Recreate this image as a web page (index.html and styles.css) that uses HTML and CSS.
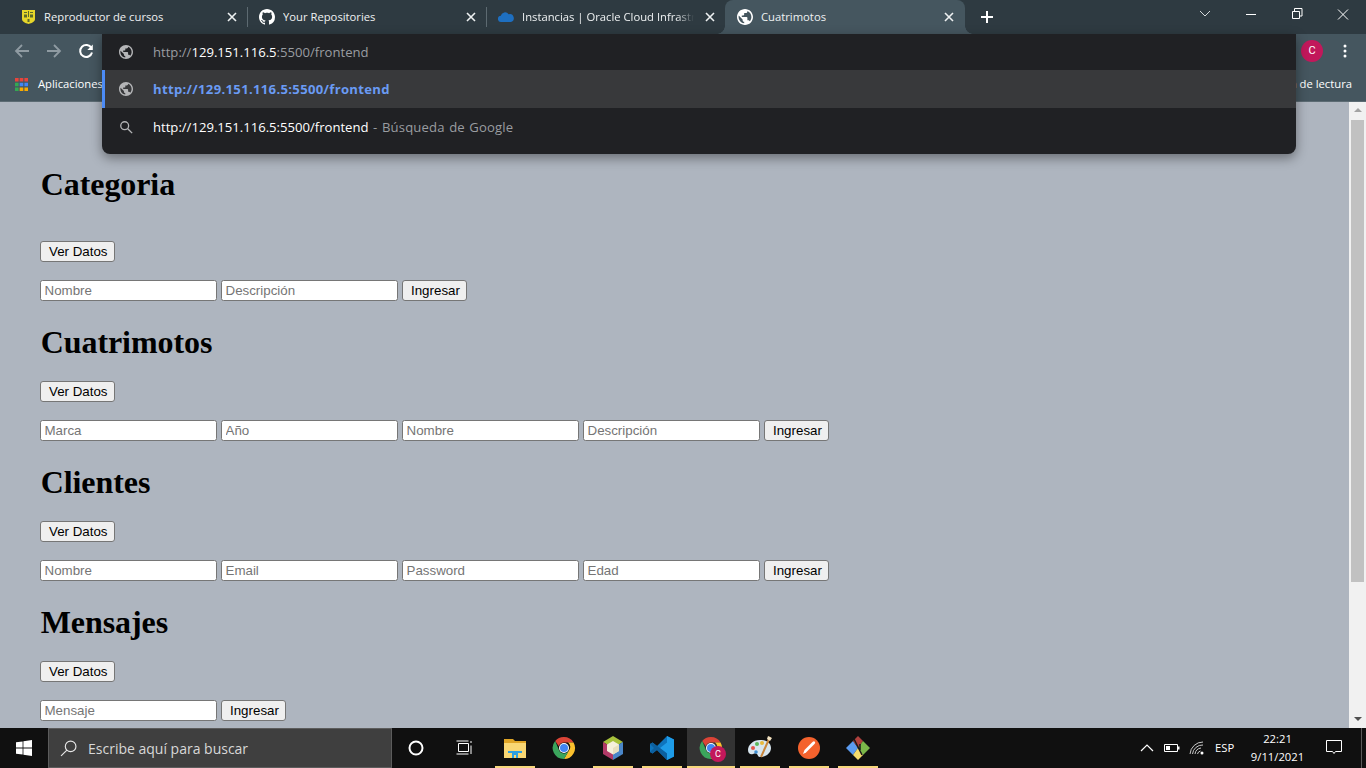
FILE: index.html
```html
<!DOCTYPE html>
<html lang="es">
<head>
<meta charset="utf-8">
<title>Cuatrimotos</title>
<link rel="stylesheet" href="styles.css">
</head>
<body>
<svg class="defs" width="0" height="0" aria-hidden="true"><defs>
<symbol id="globe" viewBox="2 2 20 20"><path fill="currentColor" d="M12 2C6.48 2 2 6.48 2 12s4.48 10 10 10 10-4.48 10-10S17.52 2 12 2zm-1 17.93c-3.95-.49-7-3.85-7-7.93 0-.62.08-1.21.21-1.79L9 15v1c0 1.1.9 2 2 2v1.93zm6.9-2.54c-.26-.81-1-1.39-1.9-1.39h-1v-3c0-.55-.45-1-1-1H8v-2h2c.55 0 1-.45 1-1V7h2c1.1 0 2-.9 2-2v-.41c2.93 1.19 5 4.06 5 7.41 0 2.08-.8 3.97-2.1 5.39z"/></symbol>
<symbol id="x" viewBox="0 0 16 16"><path d="M4 4l8 8M12 4l-8 8" stroke="currentColor" stroke-width="1.6" fill="none"/></symbol>
<symbol id="chromeicon" viewBox="0 0 24 24">
<path fill="#db4437" d="M12 1a11 11 0 0 1 9.53 5.5H12a5.500 5.500 0 0 0-5.200 3.700L3.200 5A11 11 0 0 1 12 1z"/>
<path fill="#fbc02d" d="M21.530 6.500A11 11 0 0 1 12 23l4.760-8.250A5.500 5.500 0 0 0 16 6.500z"/>
<path fill="#3ba55c" d="M3.200 5A11 11 0 0 0 12 23l4.760-8.250a5.500 5.500 0 0 1-9.500-.1z"/>
<circle cx="12" cy="12" r="5" fill="#fff"/><circle cx="12" cy="12" r="4" fill="#4285f4"/>
</symbol>
</defs></svg>

<header class="tabstrip">
  <div class="tab tab-sep">
    <svg class="fav" viewBox="-1 -1 16 16"><path fill="#e6d62a" d="M1 0h13v9c0 2.500-3 4-6.500 5C4 13 1 11.500 1 9z"/><path fill="#5a6a2a" d="M3 2h3v1H3zM9 2h3v1H9zM3 4.500h3v3H3zM9 4.500h3v3H9zM6.500 9h2v3h-2zM7 1h1v6H7z"/></svg>
    <span class="tab-title">Reproductor de cursos</span>
    <svg class="tab-x"><use href="#x"/></svg>
  </div>
  <div class="tab tab-sep">
    <svg class="fav" viewBox="0 0 16 16"><path fill="#fff" d="M8 0C3.58 0 0 3.58 0 8c0 3.54 2.29 6.53 5.47 7.59.4.07.55-.17.55-.38 0-.19-.01-.82-.01-1.49-2.01.37-2.53-.49-2.69-.94-.09-.23-.48-.94-.82-1.13-.28-.15-.68-.52-.01-.53.63-.01 1.08.58 1.23.82.72 1.21 1.87.87 2.33.66.07-.52.28-.87.51-1.07-1.78-.2-3.64-.89-3.64-3.95 0-.87.31-1.59.82-2.15-.08-.2-.36-1.02.08-2.12 0 0 .67-.21 2.2.82.64-.18 1.32-.27 2-.27.68 0 1.36.09 2 .27 1.53-1.04 2.2-.82 2.2-.82.44 1.1.16 1.92.08 2.12.51.56.82 1.27.82 2.15 0 3.07-1.87 3.75-3.65 3.95.29.25.54.73.54 1.48 0 1.07-.01 1.93-.01 2.2 0 .21.15.46.55.38A8.013 8.013 0 0016 8c0-4.42-3.58-8-8-8z"/></svg>
    <span class="tab-title">Your Repositories</span>
    <svg class="tab-x"><use href="#x"/></svg>
  </div>
  <div class="tab">
    <svg class="fav" viewBox="0 0 16 16"><path fill="#1e6fc0" d="M3.200 13A3.100 3.100 0 0 1 2.800 6.800 4.300 4.300 0 0 1 10.600 5.200 4 4 0 0 1 12.800 13z"/></svg>
    <span class="tab-title tab-fade">Instancias | Oracle Cloud Infrastructure</span>
    <svg class="tab-x"><use href="#x"/></svg>
  </div>
  <div class="tab tab-active">
    <svg class="fav"><use href="#globe"/></svg>
    <span class="tab-title">Cuatrimotos</span>
    <svg class="tab-x"><use href="#x"/></svg>
  </div>
  <svg class="newtab" viewBox="0 0 14 14"><path d="M7 1v12M1 7h12" stroke="#fff" stroke-width="2"/></svg>
  <div class="winctl">
    <svg class="winbtn" viewBox="0 0 46 28"><path d="M18 11l5 5 5-5" stroke="#d5d9db" fill="none"/></svg>
    <svg class="winbtn" viewBox="0 0 46 28"><path d="M18 14.500h10" stroke="#fff"/></svg>
    <svg class="winbtn" viewBox="0 0 46 28"><path d="M18.500 11.500h7v7h-7zM20.500 11v-2.500h7.500v7.500h-2.500" stroke="#fff" fill="none"/></svg>
    <svg class="winbtn" viewBox="0 0 46 28"><path d="M18 9.500l10 10M28 9.500l-10 10" stroke="#fff" fill="none"/></svg>
  </div>
</header>

<div class="toolbar">
  <svg class="navbtn" viewBox="0 0 16 16"><path d="M15 8H2M8 2L2 8l6 6" stroke="#8f9ba2" stroke-width="1.800" fill="none"/></svg>
  <svg class="navbtn" viewBox="0 0 16 16"><path d="M1 8h13M8 2l6 6-6 6" stroke="#8f9ba2" stroke-width="1.800" fill="none"/></svg>
  <svg class="navbtn" viewBox="0 0 16 16"><path d="M13.400 5A6 6 0 1 0 14 9.500" stroke="#fff" stroke-width="2" fill="none"/><path fill="#fff" d="M14.800 1.500v5.500H9.300z"/></svg>
  <div class="toolbar-end">
    <span class="avatar">C</span>
    <svg class="kebab" viewBox="0 0 4 16"><circle cx="2" cy="3" r="1.500"/><circle cx="2" cy="8" r="1.500"/><circle cx="2" cy="13" r="1.500"/></svg>
  </div>
</div>

<div class="bookmarks">
  <svg class="apps" viewBox="0 0 13 13">
    <path fill="#e8453c" d="M0 0h3.600v3.600H0zM4.700 0h3.600v3.600H4.700zM9.400 0H13v3.600H9.400z"/>
    <path fill="#4285f4" d="M4.700 4.700h3.600v3.600H4.700zM9.400 4.700H13v3.600H9.400z"/><path fill="#34a853" d="M0 4.700h3.600v3.600H0zM0 9.400h3.600V13H0z"/>
    <path fill="#f9ab00" d="M4.700 9.400h3.600V13H4.700zM9.400 9.400H13V13H9.400z"/>
  </svg>
  <span class="bm-text">Aplicaciones</span>
  <span class="bm-text bm-end">Lista de lectura</span>
</div>

<div class="omnibox">
  <div class="om-row om-input">
    <svg class="om-ic"><use href="#globe"/></svg>
    <span class="om-text"><span class="dim">http://</span>129.151.116.5<span class="dim">:5500/frontend</span></span>
  </div>
  <div class="om-row om-sel">
    <svg class="om-ic"><use href="#globe"/></svg>
    <span class="om-text om-link">http://129.151.116.5:5500/frontend</span>
  </div>
  <div class="om-row om-last">
    <svg class="om-ic" viewBox="0 0 16 16"><circle cx="6.500" cy="6.500" r="4.500" fill="none" stroke="currentColor" stroke-width="1.500"/><path d="M10 10l5 5" stroke="currentColor" stroke-width="1.600"/></svg>
    <span class="om-text">http://129.151.116.5:5500/frontend<span class="dim om-desc"> - Búsqueda de Google</span></span>
  </div>
</div>

<div class="viewport">
  <main class="page">
    <h1 class="first">Categoria</h1>
    <div class="row"><button>Ver Datos</button></div>
    <form class="row"><input placeholder="Nombre"><input placeholder="Descripción"><button type="button">Ingresar</button></form>

    <h1>Cuatrimotos</h1>
    <div class="row"><button>Ver Datos</button></div>
    <form class="row"><input placeholder="Marca"><input placeholder="Año"><input placeholder="Nombre"><input placeholder="Descripción"><button type="button">Ingresar</button></form>

    <h1>Clientes</h1>
    <div class="row"><button>Ver Datos</button></div>
    <form class="row"><input placeholder="Nombre"><input placeholder="Email"><input placeholder="Password"><input placeholder="Edad"><button type="button">Ingresar</button></form>

    <h1>Mensajes</h1>
    <div class="row"><button>Ver Datos</button></div>
    <form class="row"><input placeholder="Mensaje"><button type="button">Ingresar</button></form>
  </main>
  <div class="scrollbar">
    <span class="sb-up"></span>
    <span class="sb-thumb"></span>
    <span class="sb-down"></span>
  </div>
</div>

<footer class="taskbar">
  <div class="start"><svg class="win" viewBox="0 0 16 16"><path fill="#fff" d="M0 2.300l6.600-.9v6.200H0zM7.400 1.300L16 0v7.600H7.400zM0 8.400h6.600v6.200L0 13.700zM7.400 8.400H16V16l-8.600-1.300z"/></svg></div>
  <div class="search">
    <svg class="search-ic" viewBox="0 0 16 16"><circle cx="10" cy="6" r="5" fill="none" stroke="#e6e6e6" stroke-width="1.100"/><path d="M6.500 9.500L1 15" stroke="#e6e6e6" stroke-width="1.100"/></svg>
    <span>Escribe aquí para buscar</span>
  </div>
  <div class="tb-sys"><svg class="cortana" viewBox="0 0 16 16"><circle cx="8" cy="8" r="6.500" fill="none" stroke="#fff" stroke-width="2"/></svg></div>
  <div class="tb-sys"><svg class="taskview" viewBox="0 0 16 16"><path d="M2.500 3.500h10v8h-10zM.5 1h12M.5 14h12M15 1v2M15 5.500V14" stroke="#fff" fill="none"/></svg></div>
  <div class="apps-row">
    <div class="tb-app on"><svg class="tb-ic" viewBox="0 0 24 24"><path fill="#e0a526" d="M1 3h9l2 2h11v4H1z"/><path fill="#f9d774" d="M1 7h22v15H1z"/><path fill="#2f9fe0" d="M9 15h6v7h-2v-3h-2v3H9zM5 15h14v2H5z"/></svg></div>
    <div class="tb-app"><svg class="tb-ic"><use href="#chromeicon"/></svg></div>
    <div class="tb-app on"><svg class="tb-ic" viewBox="0 0 24 24"><path fill="#a7c23c" d="M12 0l10 6-10 6L2 6z"/><path fill="#b23a67" d="M2 6l10 6v12L2 18z"/><path fill="#4a86c8" d="M22 6l-10 6v12l10-6z"/><path fill="#f5f0dc" d="M12 5l6 3.500V15l-6 3.500L6 15V8.500z"/><path fill="#e8e0c0" d="M12 12l6-3.500V15l-6 3.500z"/></svg></div>
    <div class="tb-app on"><svg class="tb-ic" viewBox="0 0 24 24"><path fill="#0e74bd" d="M17 0l7 3.500v17L17 24 7 14l-4.500 3.500L0 16V8l2.500-1.500L7 10z"/><path fill="#1e9ce8" d="M17 0l7 3.500v17L17 24zM17 6.500L10 12l7 5.500z"/><path fill="#0c5f9e" d="M0 8l2.500-1.500L17 17.500V24L7 14 2.500 17.500 0 16l4-4z"/></svg></div>
    <div class="tb-app on active"><svg class="tb-ic"><use href="#chromeicon"/></svg><span class="tb-badge">C</span></div>
    <div class="tb-app on"><svg class="tb-ic" viewBox="0 0 24 24"><path fill="#d8e6ef" d="M12 4C5 4 0 9 0 14c0 4 3 5 5 4s3-1 4 0 1 3 3 3c6 0 11-4 11-9s-5-8-11-8z"/><circle cx="5" cy="12" r="2" fill="#e5544b"/><circle cx="9" cy="8" r="2" fill="#5cb85c"/><circle cx="14" cy="7" r="2" fill="#e8b93c"/><circle cx="8" cy="16" r="1.800" fill="#3f8fd2"/><path d="M22 1l-9 20" stroke="#c8863c" stroke-width="2"/><path d="M20 0l4 2-2 3-3-2z" fill="#f2e4c4"/></svg></div>
    <div class="tb-app on"><svg class="tb-ic" viewBox="0 0 24 24"><circle cx="12" cy="12" r="11" fill="#f4622d"/><path d="M6 18l1.500-4 8-8c1-1 2-1 2.500 0s0 1.500-1 2.500l-8 8z" fill="#fff"/></svg></div>
    <div class="tb-app on"><svg class="tb-ic" viewBox="0 0 24 24"><path fill="#5b9bf0" d="M7 5l5 7-5 7-7-7z"/><path fill="#b0413e" d="M12 0l5 5-5 7-5-7z"/><path fill="#7cb84a" d="M17 5l7 7-7 7-5-7z"/><path fill="#f6dd6e" d="M12 12l5 7-5 5-5-5z"/><path d="M8 3l8 16M14 8v6" stroke="#1a1a1a" stroke-width="1.500"/></svg></div>
  </div>
  <div class="tray">
    <svg class="tray-ic" viewBox="0 0 16 16"><path d="M2 11l6-6 6 6" stroke="#fff" fill="none" stroke-width="1.200"/></svg>
    <svg class="tray-ic" viewBox="0 0 16 16"><path d="M.5 4.500h13v7H.5z" stroke="#fff" fill="none"/><path d="M2 6h4v4H2zM14 6.500h1.500v3H14z" fill="#fff"/></svg>
    <svg class="tray-ic" viewBox="0 0 16 16"><g stroke="#c9c9c9" fill="none"><path d="M1 14A13 13 0 0 1 14 2"/><path d="M3.500 14A10 10 0 0 1 14 5"/><path d="M6 14a7 7 0 0 1 6-6"/><path d="M8.500 14a4 4 0 0 1 3-3"/></g><circle cx="13" cy="13" r="1.500" fill="#fff"/></svg>
    <span class="lang">ESP</span>
    <div class="clock"><span>22:21</span><span>9/11/2021</span></div>
    <svg class="notif" viewBox="0 0 16 16"><path d="M.5 .5h15v11H9.500L8 13.500 6.500 11.500h-6z" stroke="#fff" fill="none"/></svg>
    <span class="showdesk"></span>
  </div>
</footer>
</body>
</html>
```
FILE: styles.css
```css
* { box-sizing: border-box; }
html, body { margin: 0; height: 100%; overflow: hidden; }
body {
  display: flex;
  flex-direction: column;
  width: 1366px;
  height: 768px;
  font-family: "Open Sans", "Liberation Sans", sans-serif;
  position: relative;
  background: #aeb5bf;
}
.defs { position: absolute; }

.tabstrip {
  height: 34px;
  flex: none;
  display: flex;
  align-items: stretch;
  padding-left: 9px;
  background: #2e3a41;
  color: #fff;
  font-size: 11.25px;
}
.tab {
  width: 239px;
  display: flex;
  align-items: center;
  padding: 0 8px 0 11px;
  gap: 8px;
  position: relative;
}
.tab-sep::after {
  content: "";
  position: absolute;
  right: 0;
  top: 7px;
  bottom: 7px;
  width: 1px;
  background: #5d6a71;
}
.tab-active {
  background: #45565f;
  border-radius: 8px 8px 0 0;
  width: 240px;
  margin-left: -1px;
  padding-left: 12px;
}
.tab-active::before, .tab-active::after {
  content: "";
  position: absolute;
  bottom: 0;
  width: 8px;
  height: 8px;
}
.tab-active::before {
  left: -8px;
  background: radial-gradient(circle at 0 0, transparent 7.5px, #45565f 8px);
}
.tab-active::after {
  right: -8px;
  background: radial-gradient(circle at 100% 0, transparent 7.5px, #45565f 8px);
}
.fav { width: 16px; height: 16px; flex: none; color: #fff; }
.tab-title { flex: 1; white-space: nowrap; overflow: hidden; color: #eef1f2; padding-bottom: 2px; }
.tab-fade {
  -webkit-mask-image: linear-gradient(90deg, #000 90%, transparent 100%);
  mask-image: linear-gradient(90deg, #000 90%, transparent 100%);
}
.tab-x { width: 16px; height: 16px; flex: none; color: #eef1f2; }
.newtab { width: 14px; height: 14px; align-self: center; margin-left: 15px; flex: none; }
.winctl { margin-left: auto; display: flex; align-items: flex-start; }
.winbtn { width: 46px; height: 28px; flex: none; }

.toolbar {
  height: 34px;
  flex: none;
  background: #45565f;
  display: flex;
  align-items: center;
  padding-left: 14px;
  gap: 16px;
}
.navbtn { width: 16px; height: 16px; flex: none; }
.toolbar-end { margin-left: auto; display: flex; align-items: center; gap: 20px; padding-right: 19px; }
.avatar {
  width: 22px; height: 22px; border-radius: 50%;
  background: #c2185b; color: #fff;
  font: 11px/22px Roboto, sans-serif;
  text-align: center;
}
.kebab { width: 4px; height: 16px; fill: #fff; }

.bookmarks {
  height: 34px;
  flex: none;
  background: #45565f;
  border-bottom: 1px solid #5c6b73;
  display: flex;
  align-items: center;
  padding: 0 14px 0 15px;
  color: #fff;
  font-size: 11.25px;
}
.bm-text { padding-bottom: 2px; }
.apps { width: 13px; height: 13px; margin-right: 10px; flex: none; }
.bm-end { margin-left: auto; }

.omnibox {
  position: absolute;
  left: 102px;
  top: 34px;
  width: 1194px;
  height: 120px;
  background: #202124;
  border-radius: 0 0 8px 8px;
  box-shadow: 0 4px 12px rgba(0, 0, 0, .4);
  color: #fff;
  font: 13.1px/20px "Open Sans", sans-serif;
  z-index: 5;
  display: flex;
  flex-direction: column;
}
.om-row { display: flex; align-items: center; padding-left: 17px; color: #fff; }
.om-input { height: 36px; }
.om-sel { height: 38px; background: #38393b; border-left: 3px solid #4c8bf5; padding-left: 14px; }
.om-last { height: 38px; }
.om-ic { width: 14px; height: 14px; margin-right: 20px; color: #b4b5b7; flex: none; }
.dim { color: #9a9da1; }
.om-desc { letter-spacing: .15px; word-spacing: 1px; }
.om-link { color: #6a9bf4; font-weight: 700; letter-spacing: .32px; }

.viewport { flex: 1; display: flex; min-height: 0; }
.page {
  flex: 1;
  min-width: 0;
  overflow: hidden;
  padding: 41px 0 0 40px;
  background: #aeb5bf;
  font-family: "Liberation Sans", Arial, sans-serif;
}
.page h1 {
  font: 700 32px/37px "Liberation Serif", "Times New Roman", serif;
  margin: 22.5px 0 20.5px .7px;
  letter-spacing: -.07px;
  color: #000;
}
.page h1.first { margin-bottom: 38.5px; }
.row { display: flex; gap: 4px; margin: 0; }
.row + .row { margin-top: 18px; }
input, button {
  font: 13.333px "Liberation Sans", Arial, sans-serif;
  height: 21px;
  border: 1px solid #767676;
  margin: 0;
}
input {
  width: 177px;
  padding: 1px 4px 1px 3.5px;
  background: #fff;
  border-radius: 2.5px;
}
input::placeholder { color: #757575; }
button {
  padding: 0 6px 0 8px;
  background: #efefef;
  color: #000;
  border-radius: 3px;
}
.scrollbar {
  width: 17px;
  flex: none;
  background: #f1f1f1;
  display: flex;
  flex-direction: column;
  align-items: center;
}
.sb-up, .sb-down {
  width: 0; height: 0; flex: none;
  border-left: 4px solid transparent;
  border-right: 4px solid transparent;
}
.sb-up { border-bottom: 4px solid #a3a3a3; margin: 6px 0 8px; }
.sb-thumb { width: 13px; height: 462px; background: #c1c1c1; flex: none; }
.sb-down { border-top: 4px solid #505050; margin-top: auto; margin-bottom: 7px; }

.taskbar {
  height: 40px;
  flex: none;
  background: #101010;
  display: flex;
  align-items: stretch;
  color: #fff;
}
.start { width: 48px; display: flex; align-items: center; justify-content: center; flex: none; }
.win { width: 16px; height: 16px; }
.search {
  width: 344px;
  flex: none;
  background: #3f3f3f;
  border: 1px solid #5c5c5c;
  display: flex;
  align-items: center;
  padding-left: 11px;
  gap: 11px;
  font: 14px "Open Sans", sans-serif;
  color: #d8d8d8;
}
.search-ic { width: 17px; height: 17px; flex: none; }
.tb-sys { width: 48px; display: flex; align-items: center; justify-content: center; flex: none; }
.cortana { width: 16px; height: 16px; }
.taskview { width: 16px; height: 16px; }
.apps-row { display: flex; flex: none; margin-left: 2px; }
.tb-app {
  width: 49px;
  display: flex;
  align-items: center;
  justify-content: center;
  position: relative;
  flex: none;
}
.tb-app.on::after {
  content: "";
  position: absolute;
  left: 5px;
  right: 4px;
  bottom: 0;
  height: 2px;
  background: #f6d77c;
}
.tb-app.active { background: #333; width: 48px; margin-left: 1px; }
.tb-app.active::after { left: 0; right: 0; }
.tb-ic { width: 24px; height: 24px; }
.tb-badge {
  position: absolute;
  left: 23px;
  top: 18px;
  width: 16px;
  height: 16px;
  border-radius: 50%;
  background: #c2185b;
  font: 9px/16px Roboto, sans-serif;
  text-align: center;
}
.tray {
  margin-left: auto;
  display: flex;
  align-items: center;
  font: 11.25px "Open Sans", sans-serif;
  width: 236px;
  flex: none;
}
.tray-ic { width: 16px; height: 16px; margin-left: 9px; flex: none; }
.lang { margin-left: 10px; width: 20px; flex: none; white-space: nowrap; padding-bottom: 2px; }
.clock { display: flex; flex-direction: column; align-items: center; margin-left: 7.5px; width: 70px; line-height: 18px; flex: none; }
.notif { width: 16px; height: 16px; margin-left: 13px; flex: none; }
.showdesk { width: 1px; height: 100%; background: #5a5a5a; margin-left: 19.5px; flex: none; }
```
